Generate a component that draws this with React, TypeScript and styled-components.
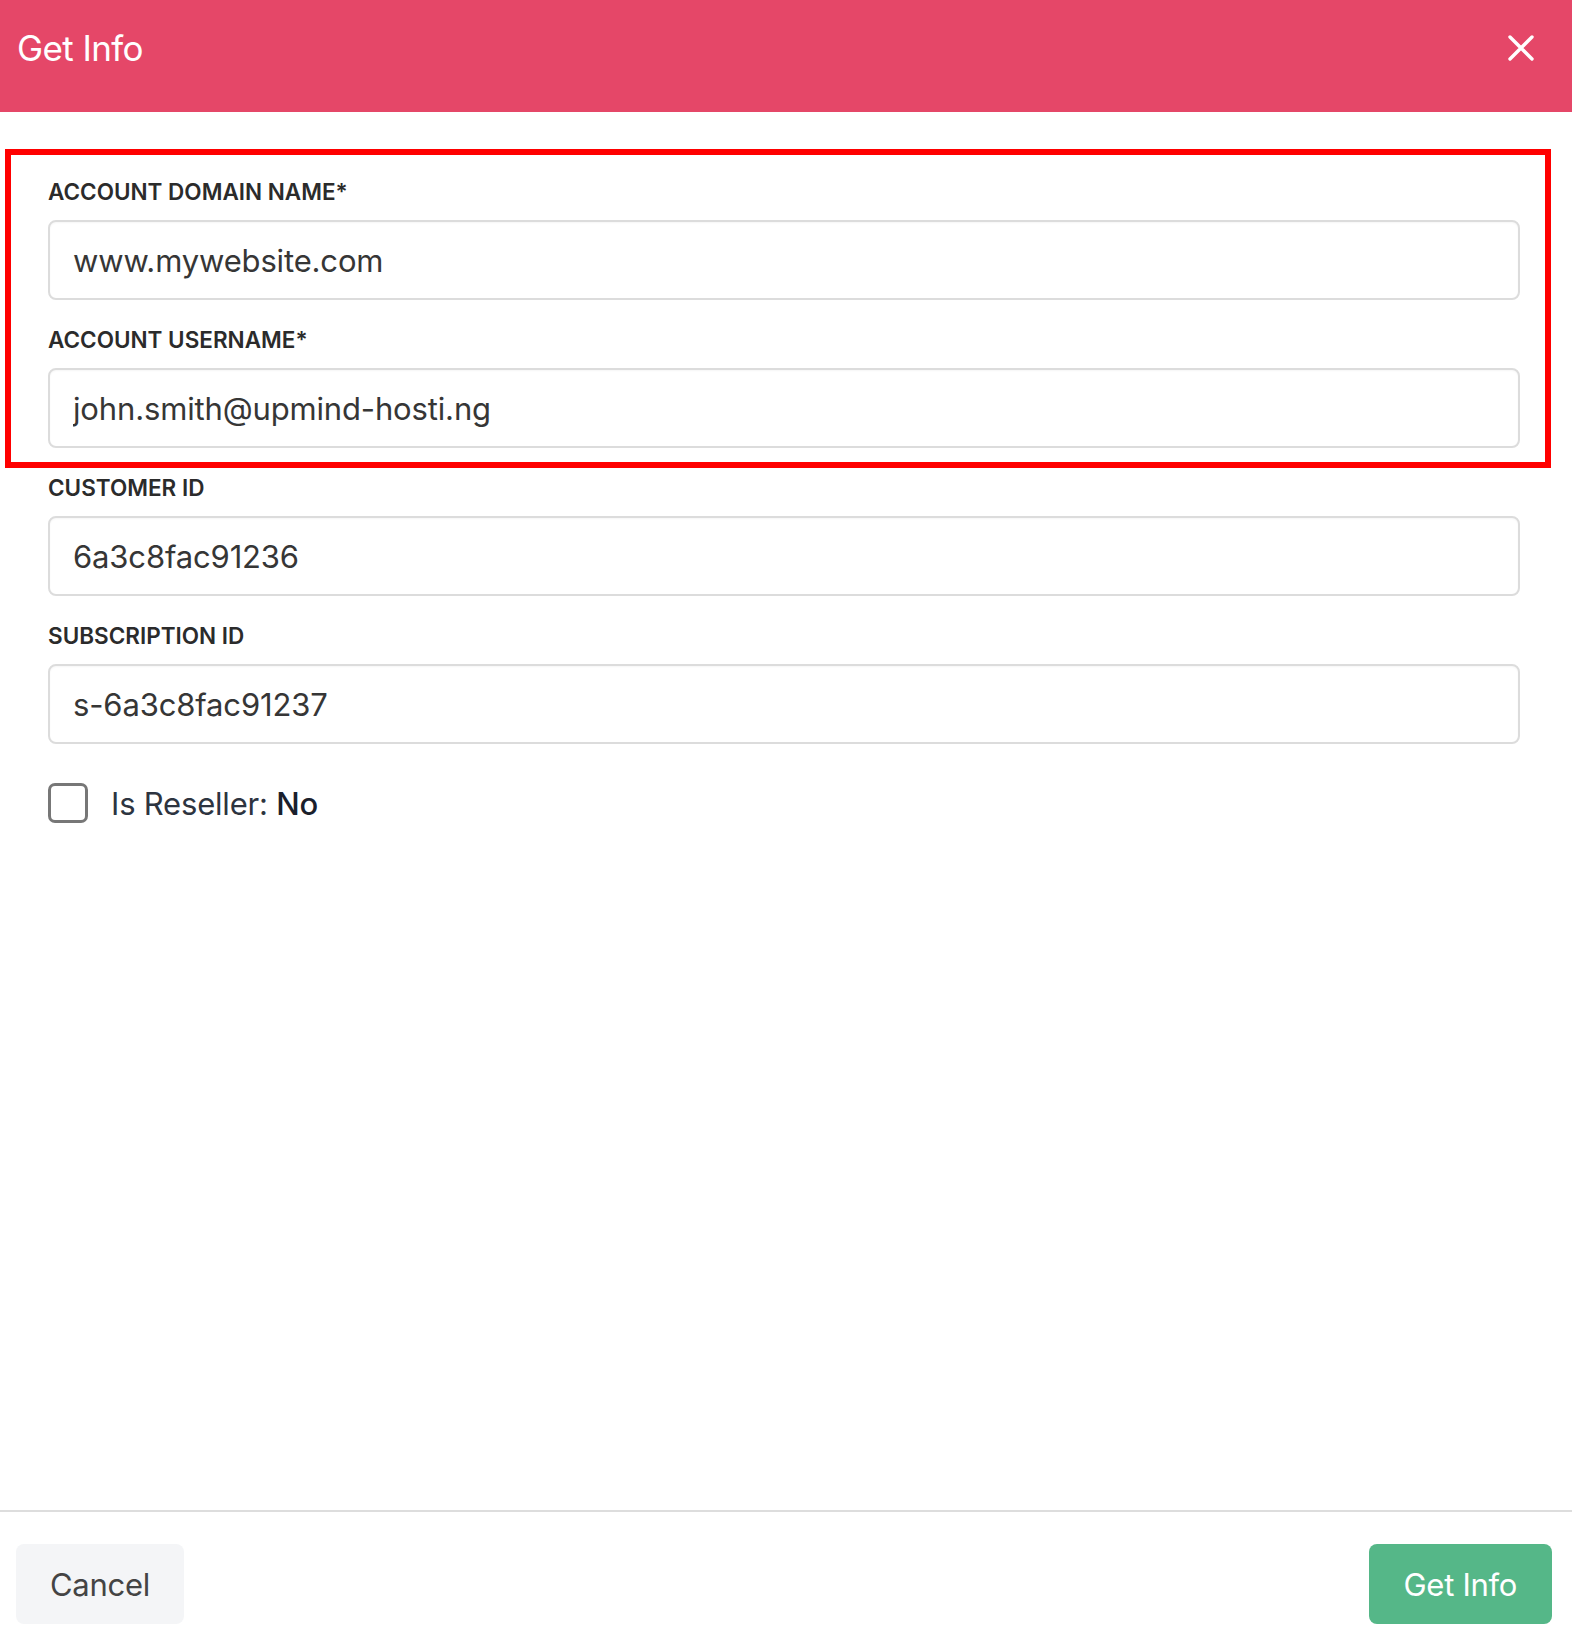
import React from 'react';
import styled, { createGlobalStyle } from 'styled-components';

const GlobalStyle = createGlobalStyle`
  html, body {
    margin: 0;
    padding: 0;
    background: #fff;
  }
  * {
    box-sizing: border-box;
  }
`;

interface Field {
  label: string;
  value: string;
}

const FIELDS: Field[] = [
  { label: 'Account domain name*', value: 'www.mywebsite.com' },
  { label: 'Account username*', value: 'john.smith@upmind-hosti.ng' },
  { label: 'Customer ID', value: '6a3c8fac91236' },
  { label: 'Subscription ID', value: 's-6a3c8fac91237' },
];

const App = () => {
  return (
    <Page>
      <GlobalStyle />
      <Header>
        <Title>Get Info</Title>
        <CloseButton aria-label="Close">
          <svg width="26" height="26" viewBox="0 0 26 26">
            <path d="M2 2 L24 24 M24 2 L2 24" stroke="#fff" strokeWidth="3.4" strokeLinecap="round" />
          </svg>
        </CloseButton>
      </Header>

      <Body>
        {FIELDS.map((f) => (
          <FieldGroup key={f.label}>
            <Label>{f.label}</Label>
            <Input readOnly value={f.value} />
          </FieldGroup>
        ))}
        <CheckRow>
          <CheckBox />
          <CheckText>
            Is Reseller: <strong>No</strong>
          </CheckText>
        </CheckRow>
      </Body>

      <Footer>
        <Button>Cancel</Button>
        <Button primary>Get Info</Button>
      </Footer>

      <Highlight />
    </Page>
  );
};

export default App;

const Page = styled.div`
  position: relative;
  display: flex;
  flex-direction: column;
  height: 1648px;
  font-family: Inter, 'Noto Sans', sans-serif;
  color: #333;
`;

const Header = styled.header`
  display: flex;
  align-items: center;
  justify-content: space-between;
  height: 112px;
  padding: 0 38px 16px 17px;
  background: #e54768;
`;

const Title = styled.h1`
  margin: 0;
  font-size: 35px;
  font-weight: 400;
  letter-spacing: -0.6px;
  color: #fff;
`;

const CloseButton = styled.button`
  display: flex;
  padding: 0;
  border: 0;
  background: none;
  cursor: pointer;
`;

const Body = styled.main`
  flex: 1;
  display: flex;
  flex-direction: column;
  gap: 26px;
  padding: 66px 52px 0 48px;
`;

const FieldGroup = styled.div`
  display: flex;
  flex-direction: column;
  gap: 14px;
`;

const Label = styled.label`
  font-size: 22.5px;
  line-height: 28px;
  font-weight: 600;
  letter-spacing: 0;
  text-transform: uppercase;
  color: #2b2b2b;
`;

const Input = styled.input`
  height: 80px;
  padding: 0 23px;
  border: 2px solid #dcdcdc;
  border-radius: 8px;
  box-shadow: inset 0 1px 2px rgba(0, 0, 0, 0.04);
  font-family: inherit;
  font-size: 31px;
  letter-spacing: -0.15px;
  color: #363636;
  outline: none;
`;

const CheckRow = styled.div`
  display: flex;
  align-items: center;
  gap: 23px;
  margin-top: 13px;
`;

const CheckBox = styled.span`
  width: 40px;
  height: 40px;
  border: 3px solid #777;
  border-radius: 7px;
`;

const CheckText = styled.span`
  font-size: 31px;
  letter-spacing: -0.2px;
  color: #2d3440;

  strong {
    font-weight: 500;
    color: #1a202c;
  }
`;

const Footer = styled.footer`
  display: flex;
  justify-content: space-between;
  padding: 32px 20px 24px 16px;
  border-top: 2px solid #ddd;
`;

const Button = styled.button<{ primary?: boolean }>`
  height: 80px;
  padding: 0 ${(p) => (p.primary ? '35px' : '34px')};
  border: 0;
  border-radius: 8px;
  font-family: inherit;
  font-size: 31px;
  letter-spacing: -0.3px;
  background: ${(p) => (p.primary ? '#55b788' : '#f4f5f7')};
  color: ${(p) => (p.primary ? '#fff' : '#444')};
  cursor: pointer;
`;

const Highlight = styled.div`
  position: absolute;
  left: 5px;
  top: 149px;
  width: 1546px;
  height: 319px;
  border: 6px solid #ff0000;
  pointer-events: none;
`;
